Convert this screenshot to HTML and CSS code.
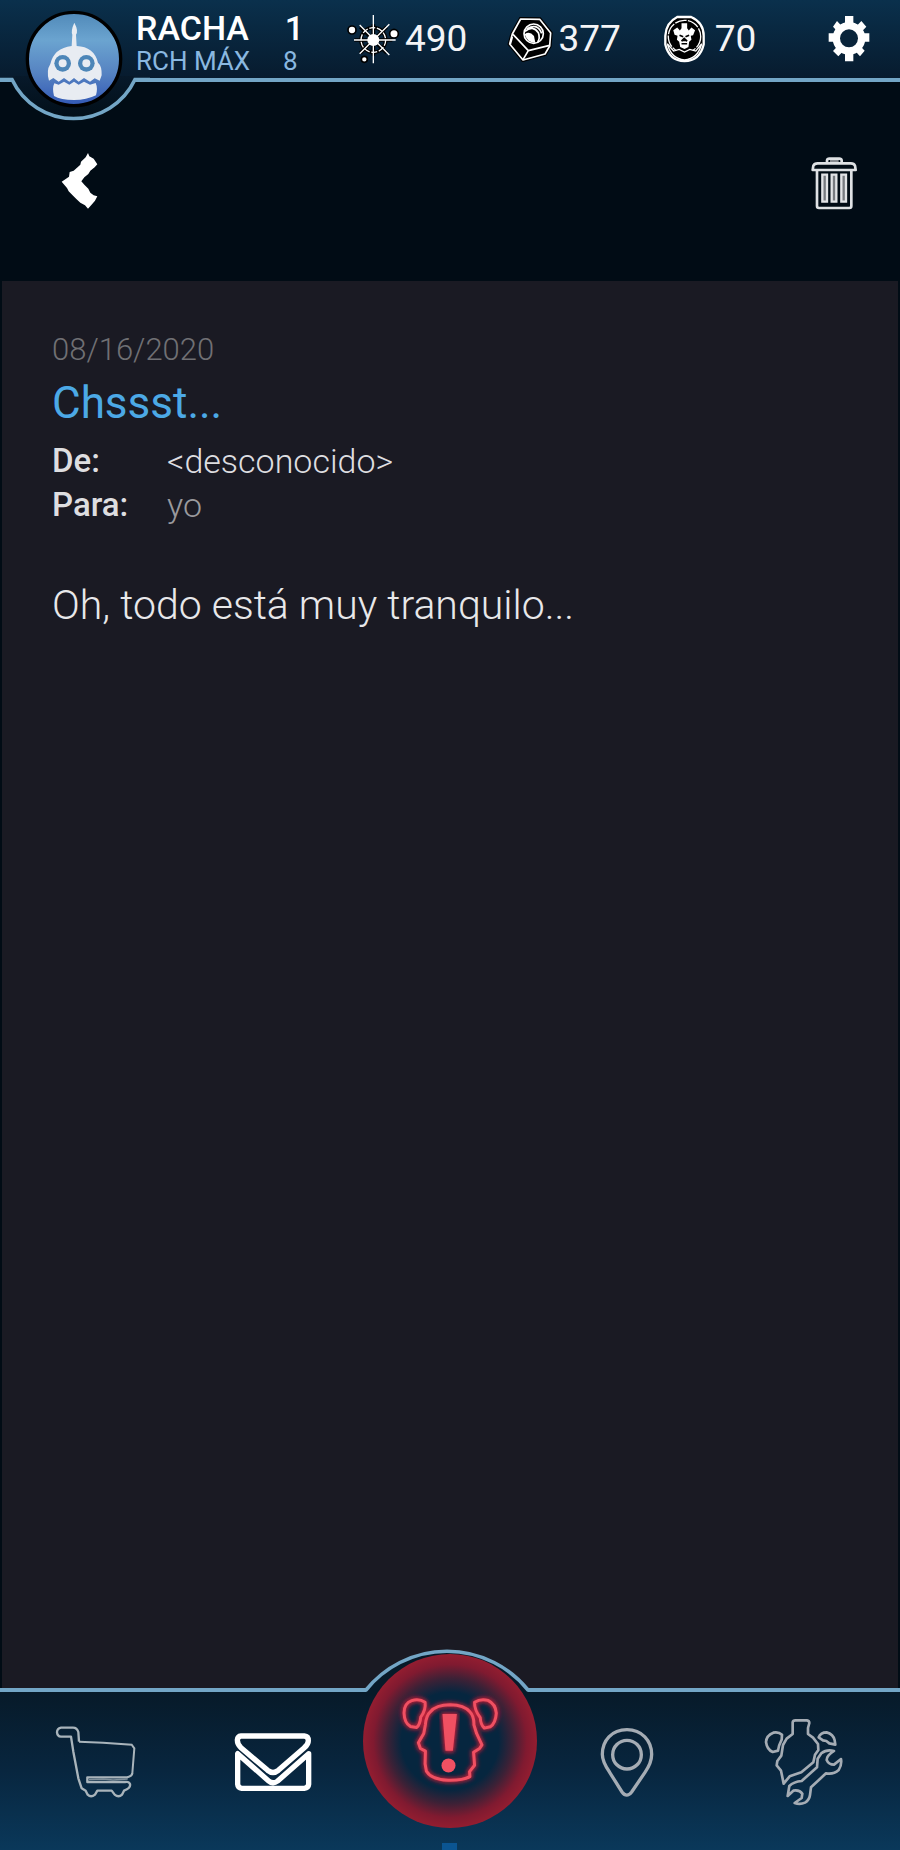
FILE: index.html
```html
<!DOCTYPE html>
<html lang="es">
<head>
<meta charset="utf-8">
<meta name="viewport" content="width=device-width, initial-scale=1">
<title>Chssst...</title>
<link rel="stylesheet" href="styles.css">
</head>
<body>
<div class="app">
  <header class="topbar">
    <svg class="topbar-notch" viewBox="0 76 150 48" aria-hidden="true">
      <defs><linearGradient id="notch" x1="0" y1="0" x2="0" y2="1"><stop offset="0" stop-color="#07192a"/><stop offset="1" stop-color="#020f19"/></linearGradient></defs>
      <path d="M12 76 L12 79 A68 68 0 0 0 135 79 L135 76 Z" fill="url(#notch)"/>
      <path d="M0 79.500 H12 A68 68 0 0 0 135 79.500 H150" fill="none" stroke="#73a6c6" stroke-width="3.600"/>
    </svg>
    <button class="avatar" aria-label="Perfil">
      <svg viewBox="75 28 294 294" aria-hidden="true">
        <defs><linearGradient id="sky" x1="0" y1="0" x2="0" y2="1"><stop offset="0" stop-color="#5089b8"/><stop offset=".3" stop-color="#6ba4d0"/><stop offset=".65" stop-color="#5683c2"/><stop offset="1" stop-color="#3258b4"/></linearGradient></defs>
        <circle cx="222" cy="175" r="140" fill="url(#sky)" stroke="#000" stroke-width="10"/>
        <path d="M223 66 Q236 90 228 102 L230 136 Q282 138 294 186 Q306 196 305 224 L299 240 L284 233 L270 243 L252 232 L236 243 L222 232 L208 243 L192 232 L176 243 L160 232 L147 240 Q138 210 151 190 Q162 142 215 136 L217 102 Q212 90 223 66Z" fill="#e8ecf2"/>
        <circle cx="188" cy="188" r="25" fill="#4d86b8"/><circle cx="188" cy="188" r="12" fill="#e8ecf2"/>
        <circle cx="259" cy="188" r="25" fill="#4d86b8"/><circle cx="259" cy="188" r="12" fill="#e8ecf2"/>
        <path d="M163 248 L176 252 L192 243 L208 252 L222 243 L236 252 L252 243 L270 252 L287 247 Q294 262 288 284 Q260 298 222 298 Q182 298 162 286 Q156 262 163 248Z" fill="#e8ecf2"/>
      </svg>
    </button>
    <div class="streak">
      <span class="streak-name">RACHA</span><span class="streak-now">1</span>
      <span class="streak-label">RCH MÁX</span><span class="streak-max">8</span>
    </div>
    <ul class="stats">
      <li class="stat">
        <svg class="stat-icon icon-spark" viewBox="75 36 162 156" aria-hidden="true">
          <g fill="none" stroke="#000" stroke-width="11"><circle cx="157" cy="117" r="37"/><path d="M157 70V164M118 78L197 156M118 156L197 78M100 117H214"/></g>
          <g fill="#fff" stroke="#000" stroke-width="5"><circle cx="93" cy="87" r="12"/><circle cx="219" cy="98" r="13"/><circle cx="130" cy="175" r="9"/></g>
          <circle cx="157" cy="117" r="37" fill="none" stroke="#fff" stroke-width="4" stroke-dasharray="18 5"/>
          <path d="M157 42V187M99 117H224M116 72L205 162M116 158L205 70" stroke="#fff" stroke-width="4"/>
          <circle cx="157" cy="117" r="18" fill="#fff"/>
        </svg>
        <span>490</span>
      </li>
      <li class="stat">
        <svg class="stat-icon icon-nut" viewBox="558 46 138 138" aria-hidden="true">
          <path d="M599 55 L656 56 L689 97 L686 136 L672 160 L606 178 L566 130 L574 100Z" fill="#000" stroke="#000" stroke-width="12"/>
          <g fill="none" stroke="#fff" stroke-width="5" stroke-linejoin="round"><path d="M599 55 L656 56 L689 97 L686 136 L672 160 L606 178 L566 130 L574 100Z"/><path d="M576 101 L622 150 L686 134 M622 150 L606 177 M574 109 L568 130"/><circle cx="638" cy="99" r="29"/><path d="M612 92 Q636 72 652 96 Q658 112 650 124 M618 84 Q650 66 662 98"/></g>
          <path d="M611 101 Q625 90 639 106 L643 126 Q620 128 611 101Z" fill="#fff"/>
        </svg>
        <span>377</span>
      </li>
      <li class="stat">
        <svg class="stat-icon icon-medal" viewBox="125 45 130 144" aria-hidden="true">
          <path d="M168 51 H210 Q248 68 248 108 V134 Q236 184 190 184 Q144 184 132 134 V108 Q134 68 168 51Z" fill="#000" stroke="#fff" stroke-width="7"/>
          <circle cx="190" cy="110" r="49" fill="none" stroke="#fff" stroke-width="4" stroke-dasharray="36 4"/>
          <path d="M138 132 Q150 178 190 181 Q230 178 242 132 L224 154 L206 149 L190 157 L174 149 L157 154Z" fill="#000" stroke="#fff" stroke-width="4"/>
          <path d="M181 70H198V85L203 92L211 83L222 91L216 106L209 108L211 120L204 126L202 142L190 148L177 142L174 126L167 120L169 108L160 105L156 91L168 83L176 92L181 85Z" fill="#fff"/>
          <path d="M175 106L186 111M204 106L193 111M181 124L189 116L198 124M181 132H198" stroke="#000" stroke-width="5"/>
        </svg>
        <span>70</span>
      </li>
    </ul>
    <button class="settings" aria-label="Ajustes">
      <svg viewBox="622 46 126 142" aria-hidden="true">
        <g fill="#fff"><path d="M673 49H698V185H673ZM624 101H746V126H624Z"/><path d="M649 64L732 153L718 170L637 81ZM722 64L737 81L653 170L637 154Z"/></g>
        <circle cx="685" cy="116" r="37" fill="none" stroke="#fff" stroke-width="24"/><circle cx="685" cy="116" r="27" fill="#09243a"/>
      </svg>
    </button>
  </header>

  <nav class="toolbar" aria-label="Mensaje">
    <button class="back" aria-label="Volver">
      <svg viewBox="182 66 111 171" aria-hidden="true"><path d="M263 69L267 79L280 86L291 103L283 112L270 122L264 132L252 142L243 154L252 164L264 176L270 188L280 196L291 199L284 212L273 225L263 236L254 226L240 218L228 207L216 195L205 184L200 174L184 155L206 140L208 126L220 122L240 104L242 95L256 82Z" fill="#fff"/></svg>
    </button>
    <button class="delete" aria-label="Eliminar">
      <svg viewBox="150 76 138 164" aria-hidden="true">
        <g fill="none" stroke="#dfe2e4" stroke-width="8" stroke-linejoin="round"><path d="M168 119V226Q168 232 174 232H265Q271 232 271 226V119"/><path d="M155 118L157 105Q160 98 170 98H270Q279 98 282 105L284 118Z"/><path d="M198 97V89Q199 84 205 84H235Q241 84 242 89V97"/></g>
        <path d="M207 91H233" stroke="#888c90" stroke-width="6"/>
        <g fill="#777b80" stroke="#e2e4e6" stroke-width="7"><path d="M184 132H198V213H184ZM212 132H226V213H212ZM241 132H255V213H241Z"/></g>
      </svg>
    </button>
  </nav>

  <main class="message">
    <time class="date" datetime="2020-08-16">08/16/2020</time>
    <h1 class="subject">Chssst...</h1>
    <dl class="people">
      <dt>De:</dt><dd>&lt;desconocido&gt;</dd>
      <dt>Para:</dt><dd class="me">yo</dd>
    </dl>
    <p class="body-text">Oh, todo está muy tranquilo...</p>
  </main>

  <nav class="tabs" aria-label="Principal">
    <svg class="tabs-arch" viewBox="356 1648 182 48" aria-hidden="true">
      <path d="M366 1696V1690A104 104 0 0 1 528 1690V1696Z" fill="#071a29"/>
      <path d="M356 1690H366A104 104 0 0 1 528 1690H538" fill="none" stroke="#73a6c6" stroke-width="3.600"/>
    </svg>
    <button class="tab" aria-label="Tienda">
      <svg class="icon-cart" viewBox="156 160 246 220" aria-hidden="true">
        <g fill="none" stroke="#a9b4bb" stroke-width="7" stroke-linejoin="round"><path d="M228 210L226 181Q222 168 210 168H174Q162 171 162 182Q163 194 174 195H204L211 240L226 320L236 350L248 357L254 369Q264 379 276 369L283 357H326L335 369Q347 379 357 369L363 357Q384 349 381 337Q378 329 366 331H253V317H372Q387 314 388 304"/></g>
        <path d="M228 210L300 213L386 219L394 230L388 304" fill="none" stroke="#a9b4bb" stroke-width="6"/>
        <path d="M258 324L300 322L330 325L374 322" stroke="#7f909c" stroke-width="4" fill="none"/>
      </svg>
    </button>
    <button class="tab" aria-label="Correo" aria-current="page">
      <svg class="icon-mail" viewBox="704 182 240 186" aria-hidden="true">
        <g fill="none" stroke="#fff" stroke-width="16" stroke-linejoin="round"><path d="M728 197H918Q930 198 930 211Q930 222 918 232L840 300Q824 313 808 300L728 232Q717 222 717 209Q718 198 728 197Z"/><path d="M718 250V342Q719 353 730 354H918Q930 353 931 342V250L838 332Q824 343 811 332Z"/></g>
      </svg>
    </button>
    <button class="tab alert" aria-label="Alerta">
      <svg class="icon-alert" viewBox="166 190 320 290" aria-hidden="true">
        <defs><filter id="glow" x="-20%" y="-20%" width="140%" height="140%"><feGaussianBlur stdDeviation="7"/></filter>
        <g id="face"><path d="M253 218Q235 206 213 213Q190 221 190 250Q191 280 209 290L228 293Q238 284 240 262Q256 241 253 218ZM401 218Q419 206 441 212Q464 223 466 250Q464 280 448 291L430 295Q419 285 418 264Q400 240 401 218Z"/><path d="M269 246Q286 225 328 225Q370 226 387 246Q400 260 399 285L407 311L423 345L416 356L398 367L401 406L386 425L387 440Q365 452 322 451Q272 449 257 424L253 402L254 364L239 356L233 339L249 311L254 284Q256 258 269 246Z"/></g></defs>
        <use href="#face" fill="none" stroke="#c91b35" stroke-width="15" filter="url(#glow)"/>
        <path d="M305 253H348L336 363H314Z" fill="#d51f39" stroke="#d51f39" stroke-width="8" filter="url(#glow)"/>
        <use href="#face" fill="none" stroke="#f05062" stroke-width="9" stroke-linejoin="round"/>
        <path d="M305 253H348L336 363H314Z" fill="#f05062"/><circle cx="323" cy="407" r="21" fill="#f05062"/>
      </svg>
    </button>
    <button class="tab" aria-label="Mapa">
      <svg class="icon-pin" viewBox="138 172 168 218" aria-hidden="true"><g fill="none" stroke="#a5acb4" stroke-width="10"><path d="M222 183C176 183 148 216 148 257C148 278 158 294 170 311L207 370Q221 389 236 370L276 311C288 294 296 278 296 257C296 216 266 183 222 183Z"/><circle cx="222" cy="258" r="43"/></g></svg>
    </button>
    <button class="tab" aria-label="Taller">
      <svg class="icon-tools" viewBox="636 140 240 266" aria-hidden="true">
        <g fill="none" stroke="#a5acb4" stroke-width="8" stroke-linejoin="round"><path d="M722 188V153Q723 147 730 147H765Q772 148 772 155L768 170V188L783 199L798 218L799 236L789 250L784 273L748 303L713 315L695 337L687 298L674 282L676 269L688 253L693 221L704 202Z"/><path d="M690 190Q680 181 664 184Q643 192 642 212Q645 235 662 242L678 238Q680 222 689 205ZM800 198Q806 183 824 183Q844 188 848 207L850 220L832 216L823 209L813 207Z"/><path d="M846 239Q824 233 808 246L797 262L795 288L749 329Q725 331 712 344L707 374L724 358Q743 355 751 367L749 380L728 395Q744 401 759 394Q772 386 774 371L777 348L822 306Q845 310 860 296Q870 281 867 263L846 280Q830 280 824 266Q824 253 846 239Z"/></g>
      </svg>
    </button>
    <span class="home-mark"></span>
  </nav>
</div>
</body>
</html>
```
FILE: styles.css
```css
* {
  box-sizing: border-box;
}

body {
  margin: 0;
  background: #010c15;
  color: #dedee0;
  font-family: Roboto, "Liberation Sans", sans-serif;
}

button {
  display: flex;
  align-items: center;
  justify-content: center;
  padding: 0;
  border: 0;
  background: none;
  cursor: pointer;
}

svg {
  display: block;
}

.app {
  display: flex;
  flex-direction: column;
  min-height: 100vh;
}

.topbar {
  position: relative;
  display: flex;
  align-items: flex-start;
  height: 82px;
  padding: 0 30px 0 25px;
  border-bottom: 4px solid #73a6c6;
  background: linear-gradient(#0a304c, #071b2e);
}

.topbar-notch {
  position: absolute;
  top: 76px;
  left: 0;
  width: 150px;
  height: 48px;
}

.avatar {
  position: relative;
  flex: none;
  width: 98px;
  margin: 10px 13px 0 0;
}

.avatar svg {
  width: 98px;
}

.streak {
  display: grid;
  grid-template-columns: 136px 32px;
  margin-top: 10px;
}

.streak-name,
.streak-now {
  color: #fff;
  font-size: 34px;
  font-weight: 500;
  line-height: 36px;
}

.streak-label,
.streak-max {
  color: #8ab8e0;
  font-size: 26px;
  line-height: 30px;
}

.streak-now {
  text-align: right;
}

.streak-max {
  padding-left: 11px;
}

.stats {
  display: flex;
  gap: 40px;
  margin: 16px 0 0 42px;
  padding: 0;
  list-style: none;
}

.stat {
  display: flex;
  align-items: center;
  gap: 5px;
  height: 46px;
  color: #f4f4f6;
  font-size: 37px;
  line-height: 46px;
}

.stat:last-child {
  gap: 9px;
  margin-left: 2px;
}

.icon-spark {
  width: 54px;
}

.icon-nut {
  width: 46px;
}

.icon-medal {
  width: 43px;
}

.settings {
  margin: 15px 0 0 auto;
}

.settings svg {
  width: 42px;
}

.toolbar {
  display: flex;
  justify-content: space-between;
  align-items: flex-start;
  height: 199px;
  padding: 70px 43px 0 61px;
}

.back svg {
  width: 37px;
}

.delete {
  margin-top: 4px;
}

.delete svg {
  width: 46px;
}

.message {
  flex: 1;
  margin: 0 2px;
  padding: 50px;
  background: #1a1a23;
}

.date {
  display: block;
  color: #707074;
  font-size: 31px;
  font-weight: 300;
  line-height: 38px;
}

.subject {
  margin: 8px 0 10px;
  color: #4ca9e6;
  font-size: 44px;
  font-weight: 400;
  line-height: 52px;
}

.people {
  display: grid;
  grid-template-columns: 115px 1fr;
  margin: 0;
  font-size: 34px;
  line-height: 44px;
}

.people dt {
  font-size: 33px;
  font-weight: 500;
}

.people dd {
  margin: 0;
  font-weight: 300;
}

.people .me {
  color: #99999d;
}

.body-text {
  margin: 52px 0 0;
  color: #e8e8ea;
  font-size: 41px;
  font-weight: 300;
  line-height: 52px;
}

.tabs {
  position: relative;
  display: grid;
  grid-template-columns: repeat(5, 1fr);
  height: 162px;
  padding: 0 8px;
  border-top: 4px solid #73a6c6;
  background: linear-gradient(#071a29, #08263f 50%, #0a385a);
}

.tabs-arch {
  position: absolute;
  top: -44px;
  left: 50%;
  width: 182px;
  height: 48px;
  margin-left: -94px;
}

.tab {
  padding-bottom: 18px;
}

.icon-cart {
  width: 82px;
}

.icon-mail {
  width: 80px;
}

.icon-pin {
  width: 56px;
}

.icon-tools {
  width: 80px;
}

.alert {
  position: relative;
  justify-self: center;
  width: 174px;
  height: 174px;
  margin-top: -38px;
  padding: 0;
  border-radius: 50%;
  background: radial-gradient(circle closest-side, #06263f 0 56%, #3c2136 72%, #801a30 88%, #931d30 100%);
}

.icon-alert {
  width: 107px;
}

.home-mark {
  position: absolute;
  bottom: 0;
  left: 50%;
  width: 15px;
  height: 7px;
  margin-left: -8px;
  background: #0b5592;
}
```
